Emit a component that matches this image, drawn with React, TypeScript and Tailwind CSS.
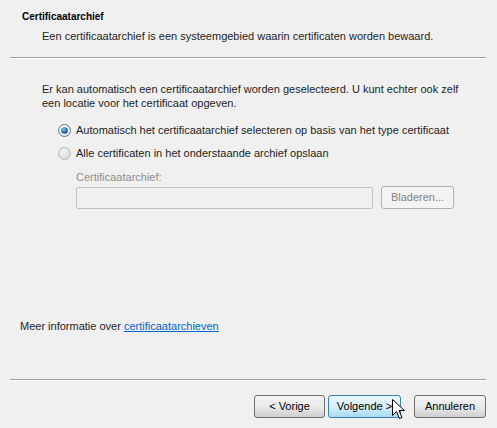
import React from "react";

const font = { fontFamily: '"Liberation Sans", Arial, sans-serif' };

function Radio({ checked }: { checked?: boolean }) {
  return (
    <svg width="13" height="13" viewBox="0 0 13 13" className="shrink-0">
      <defs>
        <radialGradient id={checked ? "rg1" : "rg2"} cx="0.4" cy="0.35" r="0.7">
          <stop offset="0" stopColor={checked ? "#ffffff" : "#f4f4f4"} />
          <stop offset="1" stopColor={checked ? "#dde6ee" : "#d8d8d8"} />
        </radialGradient>
        <radialGradient id="dot" cx="0.4" cy="0.35" r="0.7">
          <stop offset="0" stopColor="#8ad0f5" />
          <stop offset="0.6" stopColor="#2a6cae" />
          <stop offset="1" stopColor="#1a3f74" />
        </radialGradient>
      </defs>
      <circle cx="6.5" cy="6.5" r="6" fill={`url(#${checked ? "rg1" : "rg2"})`} stroke={checked ? "#5d7b97" : "#b9b9b9"} strokeWidth="1" />
      {checked && <circle cx="6.5" cy="6.5" r="3.3" fill="url(#dot)" />}
    </svg>
  );
}

function Btn({ children, hot, disabled, w }: { children: React.ReactNode; hot?: boolean; disabled?: boolean; w: string }) {
  const base = "h-[23px] rounded-[3px] border text-[11px] flex items-center justify-center whitespace-nowrap";
  if (disabled)
    return <div className={`${base} ${w} border-[#adb2b5] bg-[#f4f4f4] text-[#838383]`}>{children}</div>;
  if (hot)
    return (
      <div className={`${base} ${w} border-[#3c7fb1] bg-gradient-to-b from-[#eaf6fd] via-[#d9f0fc] to-[#a7d9f5] text-black`}>{children}</div>
    );
  return (
    <div className={`${base} ${w} border-[#707070] bg-gradient-to-b from-[#f2f2f2] via-[#ebebeb] to-[#cfcfcf] text-black`}>{children}</div>
  );
}

function Sep() {
  return <div className="ml-[10px] w-[476px] h-[2px] border-t border-[#a0a0a0] border-b border-b-white" />;
}

export default function App() {
  return (
    <div className="w-[497px] h-[428px] bg-[#f0f0f0] text-[11px] text-[#1e1e1e] relative overflow-hidden whitespace-nowrap" style={font}>
      <div className="h-[9px]" />
      <div className="h-[16px] leading-[16px] pl-[22px] font-bold text-[10px] text-black">Certificaatarchief</div>
      <div className="h-[3px]" />
      <div className="h-[16px] leading-[16px] pl-[42px]">Een certificaatarchief is een systeemgebied waarin certificaten worden bewaard.</div>
      <div className="h-[13px]" />
      <Sep />
      <div className="h-[23px]" />
      <div className="pl-[42px] leading-[14px]">
        <div className="h-[14px]">Er kan automatisch een certificaatarchief worden geselecteerd. U kunt echter ook zelf</div>
        <div className="h-[14px]">een locatie voor het certificaat opgeven.</div>
      </div>
      <div className="h-[12px]" />
      <div className="pl-[58px] flex flex-col gap-[7px]">
        <div className="flex items-center gap-[5px] h-[16px]">
          <Radio checked />
          <span>Automatisch het certificaatarchief selecteren op basis van het type certificaat</span>
        </div>
        <div className="flex items-center gap-[5px] h-[16px]">
          <Radio />
          <span>Alle certificaten in het onderstaande archief opslaan</span>
        </div>
      </div>
      <div className="h-[8px]" />
      <div className="pl-[76px] h-[16px] leading-[16px] text-[#8d8d8d]">Certificaatarchief:</div>
      <div className="h-[1px]" />
      <div className="pl-[76px] flex items-center gap-[8px]">
        <div className="w-[297px] h-[22px] border border-[#c2c2c2] bg-[#f0f0f0] rounded-[2px]" />
        <Btn disabled w="w-[73px]">Bladeren...</Btn>
      </div>
      <div className="h-[109px]" />
      <div className="h-[16px] leading-[16px] pl-[20px]">
        Meer informatie over{" "}
        <span className="text-[#0066cc] underline">certificaatarchieven</span>
      </div>
      <div className="h-[45px]" />
      <Sep />
      <div className="h-[14px]" />
      <div className="pl-[254px] flex">
        <Btn w="w-[71px]">&lt; Vorige</Btn>
        <div className="w-[3px]" />
        <Btn hot w="w-[73px]">Volgende &gt;</Btn>
        <div className="w-[13px]" />
        <Btn w="w-[72px]">Annuleren</Btn>
      </div>
      <svg className="absolute left-[392px] top-[399px]" width="14" height="22" viewBox="0 0 14 22">
        <path d="M0.5 0.5 L0.5 16.5 L4.5 12.5 L7.5 19.5 L10 18.5 L7 11.5 L12.5 11.5 Z" fill="white" stroke="black" strokeWidth="1" />
      </svg>
    </div>
  );
}
